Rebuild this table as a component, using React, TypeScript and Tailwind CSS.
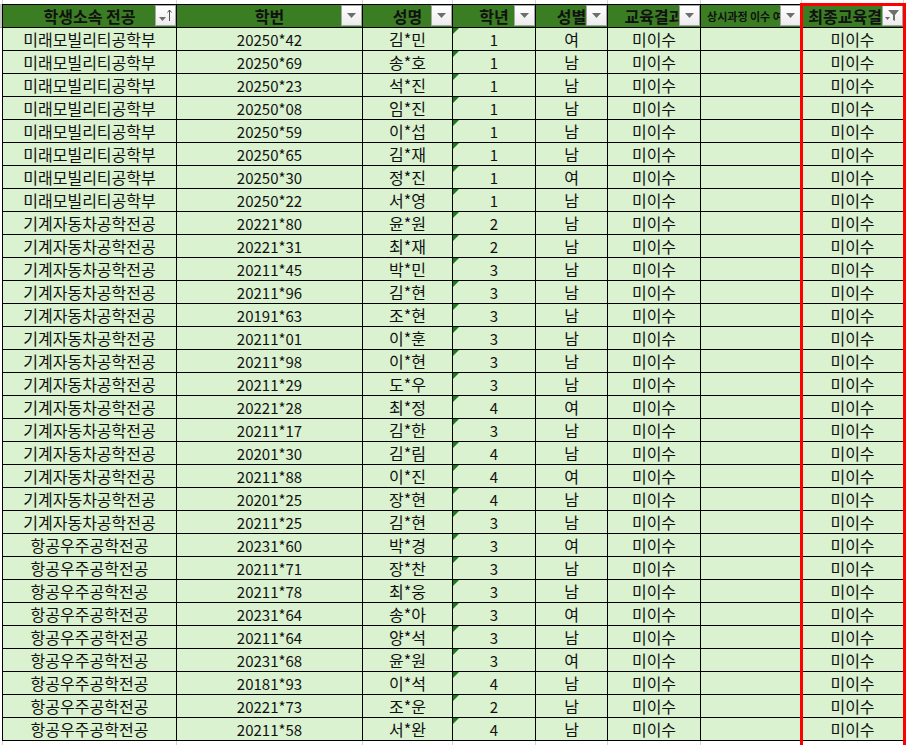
import React from "react";

const cols = "grid grid-cols-[174px_186px_90px_83px_72px_93px_101px_102px]";

const rows: string[][] = [
  ["미래모빌리티공학부", "20250*42", "김*민", "1", "여"],
  ["미래모빌리티공학부", "20250*69", "송*호", "1", "남"],
  ["미래모빌리티공학부", "20250*23", "석*진", "1", "남"],
  ["미래모빌리티공학부", "20250*08", "임*진", "1", "남"],
  ["미래모빌리티공학부", "20250*59", "이*섭", "1", "남"],
  ["미래모빌리티공학부", "20250*65", "김*재", "1", "남"],
  ["미래모빌리티공학부", "20250*30", "정*진", "1", "여"],
  ["미래모빌리티공학부", "20250*22", "서*영", "1", "남"],
  ["기계자동차공학전공", "20221*80", "윤*원", "2", "남"],
  ["기계자동차공학전공", "20221*31", "최*재", "2", "남"],
  ["기계자동차공학전공", "20211*45", "박*민", "3", "남"],
  ["기계자동차공학전공", "20211*96", "김*현", "3", "남"],
  ["기계자동차공학전공", "20191*63", "조*현", "3", "남"],
  ["기계자동차공학전공", "20211*01", "이*훈", "3", "남"],
  ["기계자동차공학전공", "20211*98", "이*현", "3", "남"],
  ["기계자동차공학전공", "20211*29", "도*우", "3", "남"],
  ["기계자동차공학전공", "20221*28", "최*정", "4", "여"],
  ["기계자동차공학전공", "20211*17", "김*한", "3", "남"],
  ["기계자동차공학전공", "20201*30", "김*림", "4", "남"],
  ["기계자동차공학전공", "20211*88", "이*진", "4", "여"],
  ["기계자동차공학전공", "20201*25", "장*현", "4", "남"],
  ["기계자동차공학전공", "20211*25", "김*현", "3", "남"],
  ["항공우주공학전공", "20231*60", "박*경", "3", "여"],
  ["항공우주공학전공", "20211*71", "장*찬", "3", "남"],
  ["항공우주공학전공", "20211*78", "최*웅", "3", "남"],
  ["항공우주공학전공", "20231*64", "송*아", "3", "여"],
  ["항공우주공학전공", "20211*64", "양*석", "3", "남"],
  ["항공우주공학전공", "20231*68", "윤*원", "3", "여"],
  ["항공우주공학전공", "20181*93", "이*석", "4", "남"],
  ["항공우주공학전공", "20221*73", "조*운", "2", "남"],
  ["항공우주공학전공", "20211*58", "서*완", "4", "남"],
];

function FilterButton({ kind = "down" }: { kind?: "down" | "sort" | "filter" }) {
  return (
    <div className="absolute right-0 top-0 w-[21px] h-[21px] border border-[#a6a6a6] bg-gradient-to-b from-white to-[#ececec] flex items-center justify-center">
      {kind === "down" && (
        <svg width="9" height="5" viewBox="0 0 9 5">
          <path d="M0 0h9L4.5 5z" fill="#6e6e6e" />
        </svg>
      )}
      {kind === "sort" && (
        <svg width="15" height="14" viewBox="0 0 15 14">
          <path d="M1 8h7L4.5 12z" fill="#6e6e6e" />
          <path d="M11.5 1v11" stroke="#555" strokeWidth="1" />
          <path d="M9.5 3.5L11.5 1l2 2.5" stroke="#555" strokeWidth="1" fill="none" />
        </svg>
      )}
      {kind === "filter" && (
        <svg width="15" height="13" viewBox="0 0 15 13">
          <path d="M3 1h11L10 6v6l-2-1V6z" fill="#6e6e6e" />
          <path d="M0 8h5L2.5 11z" fill="#6e6e6e" />
        </svg>
      )}
    </div>
  );
}

function HeaderCell({
  label,
  kind,
  small,
}: {
  label: string;
  kind?: "down" | "sort" | "filter";
  small?: boolean;
}) {
  return (
    <div className="relative h-[23px] border-r border-b border-black bg-[#3a7d22] overflow-hidden flex items-center justify-center">
      <span
        className={
          small
            ? "whitespace-nowrap font-bold text-[11px] text-[#111] pr-[2px]"
            : "whitespace-nowrap font-bold text-[16px] leading-none text-[#111]"
        }
      >
        {label}
      </span>
      <FilterButton kind={kind} />
    </div>
  );
}

function Cell({
  children,
  flag,
  num,
}: {
  children?: React.ReactNode;
  flag?: boolean;
  num?: boolean;
}) {
  return (
    <div
      className={
        num
          ? "relative h-[23px] border-r border-b border-black bg-[#daf2d0] flex items-center justify-center text-[15px] leading-none text-[#111] whitespace-nowrap"
          : "relative h-[23px] border-r border-b border-black bg-[#daf2d0] flex items-center justify-center text-[16px] leading-none text-[#111] whitespace-nowrap"
      }
    >
      {flag && (
        <span className="absolute left-0 top-0 w-0 h-0 border-t-[6px] border-r-[6px] border-t-[#1b7a1b] border-r-transparent" />
      )}
      {children}
    </div>
  );
}

function GridStrip({ h }: { h: string }) {
  return (
    <div className={`flex ${h}`}>
      <div className="w-[3px] border-r border-[#d4d4d4]" />
      <div className={cols}>
        {[0, 1, 2, 3, 4, 5, 6, 7].map((i) => (
          <div key={i} className="border-r border-[#d4d4d4]" />
        ))}
      </div>
    </div>
  );
}

export default function App() {
  return (
    <div className="relative w-[906px] h-[745px] overflow-hidden bg-white font-['Noto_Sans_CJK_KR','Noto_Sans',sans-serif]">
      <GridStrip h="h-[4px]" />
      <div className="flex">
        <div className="w-[2px] flex flex-col">
          <div className="h-[24px] bg-[#c8c8c8] border-b border-[#9a9a9a]" />
        </div>
        <div className="border-l border-t border-black">
          <div className={cols}>
            <HeaderCell label="학생소속 전공" kind="sort" />
            <HeaderCell label="학번" />
            <HeaderCell label="성명" />
            <HeaderCell label="학년" />
            <HeaderCell label="성별" />
            <HeaderCell label="교육결과" />
            <HeaderCell label="상시과정 이수 여부" small />
            <HeaderCell label="최종교육결과" kind="filter" />
          </div>
          {rows.map((r, i) => (
            <div key={i} className={cols}>
              <Cell>{r[0]}</Cell>
              <Cell num>{r[1]}</Cell>
              <Cell>{r[2]}</Cell>
              <Cell flag num>{r[3]}</Cell>
              <Cell>{r[4]}</Cell>
              <Cell>미이수</Cell>
              <Cell />
              <Cell>미이수</Cell>
            </div>
          ))}
        </div>
      </div>
      <GridStrip h="h-[8px]" />
      <div className="absolute left-[800px] top-[3px] w-[106px] h-[760px] border-[3px] border-[#ff0000] pointer-events-none" />
    </div>
  );
}
